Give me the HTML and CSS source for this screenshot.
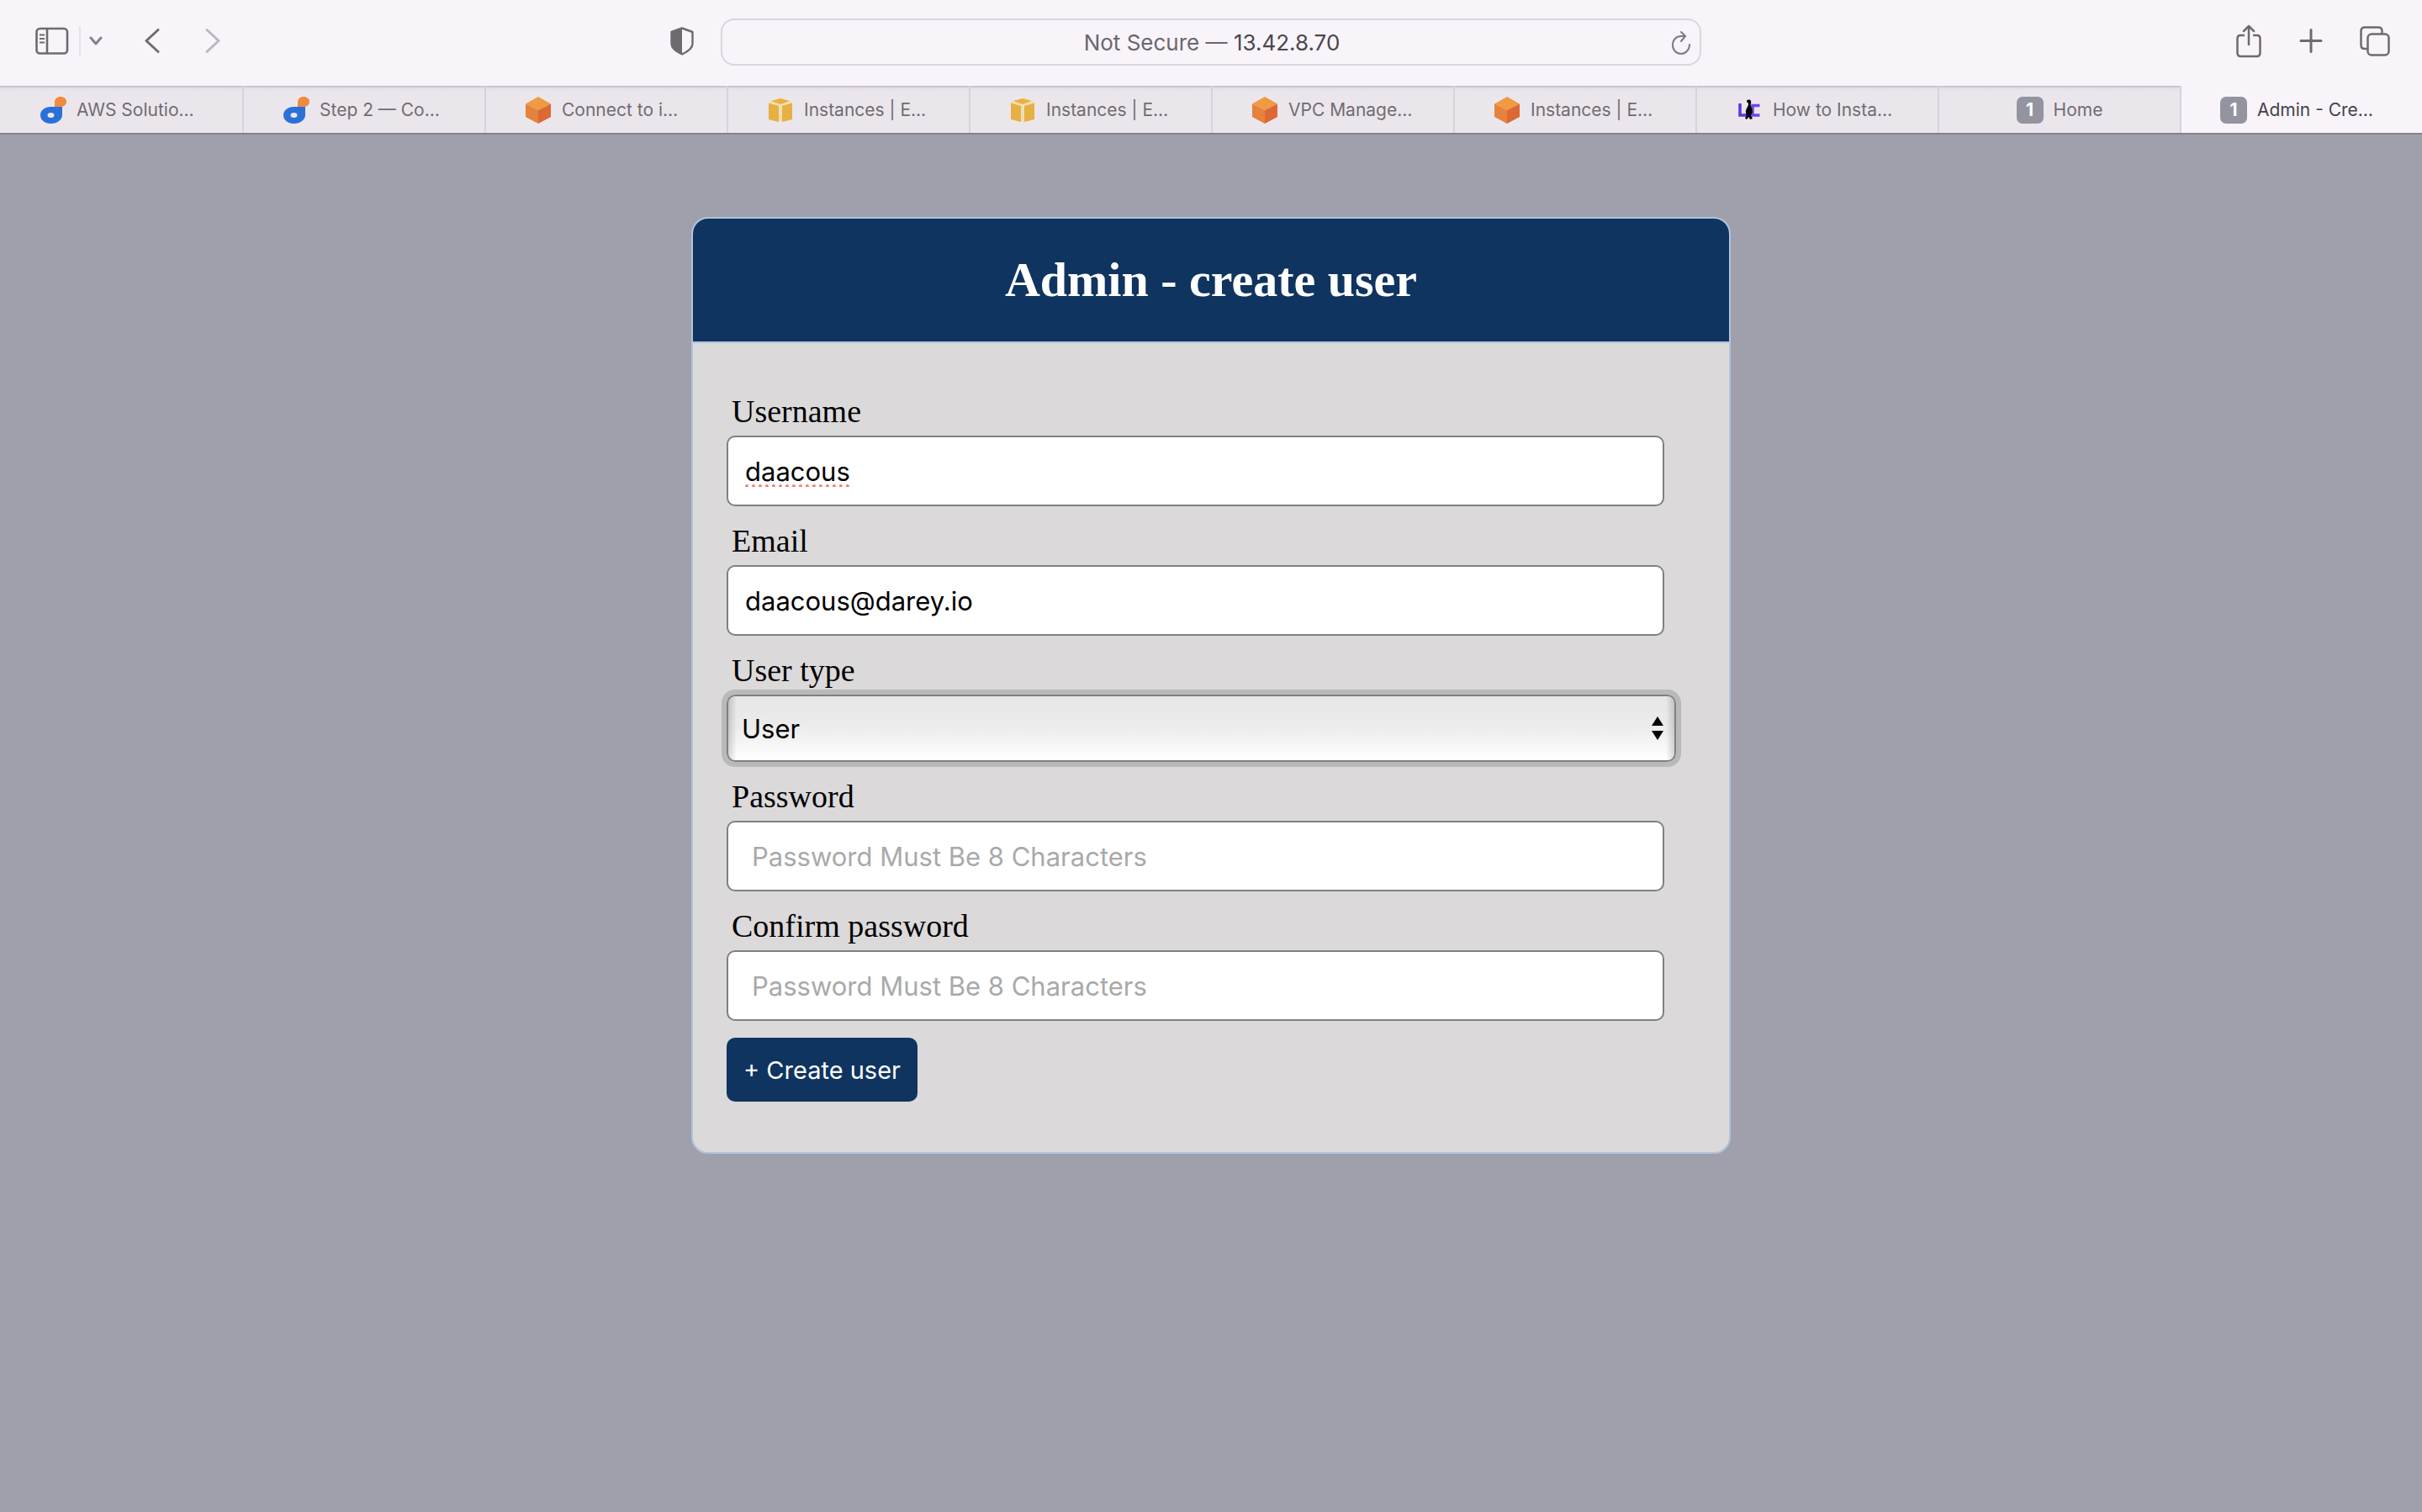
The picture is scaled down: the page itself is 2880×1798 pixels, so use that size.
FILE: index.html
```html
<!DOCTYPE html>
<html lang="en">
<head>
  <meta charset="utf-8">
  <title>Admin - Create user</title>
  <link rel="stylesheet" href="styles.css">
</head>
<body>
  <svg class="sprite" aria-hidden="true">
    <symbol id="ocean" viewBox="0 0 32 32">
      <path fill="#f08a3e" d="M18 12V6.500C18 2.500 21 0 25 0c4 0 7 2.400 7 6 0 3.500-3 6-7 6z"/>
      <path fill="#2b70d8" fill-rule="evenodd" d="M27 12v9.500C27 27.500 21 32 13.500 32S1 27.500 1 22s5-10 12.500-10zM13.500 19c-2.500 0-4 1.300-4 3s1.500 3 4 3 4-1.300 4-3-1.500-3-4-3z"/>
    </symbol>
    <symbol id="cube" viewBox="0 0 32 32">
      <path fill="#f09a42" d="M16 0l15 8.500L16 16 1 8.500z"/>
      <path fill="#e5823b" d="M1 8.500L16 16v16L1 24z"/>
      <path fill="#dc6834" d="M31 8.500L16 16v16l15-8z"/>
    </symbol>
    <symbol id="box" viewBox="0 0 32 32">
      <path fill="#f0dfb6" d="M16 2l14 4v20l-14 4-14-4V6z"/>
      <path fill="#ecb03a" d="M16 2l11 3-11 4L5 5z"/>
      <path fill="#e6b043" d="M2 7.500l12 3.500v19L2 27zM30 7.500L18 11v19l12-3z"/>
    </symbol>
    <symbol id="penguin" viewBox="0 0 32 32">
      <path fill="none" stroke="#5a34dc" stroke-width="3.500" d="M5 8v14h10"/>
      <path fill="none" stroke="#6f45ee" stroke-width="3.500" d="M28.500 10.500H20V22h8.500"/>
      <path fill="#000" d="M13 6c0-3 4-3 5-1 1 2-1 3.500 0 6 2 4 2.500 8 0 11l2 4-3 1-1.500-3-2.500 3-2-1.500 2-3.500c-2-3-1-7 1-10 1-2 1-3 1-4z"/>
    </symbol>
  </svg>

  <header class="browser">
    <div class="toolbar">
      <div class="toolbar-left">
        <button class="icon-button sidebar" type="button" aria-label="Sidebar">
          <svg width="40" height="34" viewBox="0 0 40 34" fill="none" stroke="#6f6a70" stroke-width="2.600"><rect x="1.500" y="2" width="36.500" height="29.500" rx="4"/><path d="M14 2v29"/><path stroke-width="2" d="M5 9.500h6M5 14h6M5 18.500h6"/></svg>
        </button>
        <span class="divider"></span>
        <button class="icon-button chevron" type="button" aria-label="Tab groups">
          <svg width="16" height="12" viewBox="0 0 16 12" fill="none" stroke="#86828a" stroke-width="3" stroke-linecap="round" stroke-linejoin="round"><path d="M2 2l6 7 6-7"/></svg>
        </button>
        <button class="icon-button back" type="button" aria-label="Back">
          <svg width="18" height="30" viewBox="0 0 18 30" fill="none" stroke="#6f6a70" stroke-width="3" stroke-linecap="round" stroke-linejoin="round"><path d="M16 1.500L2 14.500l14 13"/></svg>
        </button>
        <button class="icon-button forward" type="button" aria-label="Forward">
          <svg width="18" height="30" viewBox="0 0 18 30" fill="none" stroke="#bdb8bf" stroke-width="3" stroke-linecap="round" stroke-linejoin="round"><path d="M2 1.500l14 13-14 13"/></svg>
        </button>
        <button class="icon-button shield" type="button" aria-label="Privacy report">
          <svg width="28" height="34" viewBox="0 0 28 34"><path fill="none" stroke="#6f6a70" stroke-width="2.400" stroke-linejoin="round" d="M14 1.500L26.500 6v14c0 5-6 9.500-12.500 12.500C7.500 29.500 1.500 25 1.500 20V6z"/><path fill="#6f6a70" d="M14 1L1 6v14c0 5 6 10 13 13z"/></svg>
        </button>
      </div>
      <div class="address">
        <a class="url" href="#">Not Secure — <span class="host">13.42.8.70</span></a>
        <button class="icon-button reload" type="button" aria-label="Reload">
          <svg width="24" height="30" viewBox="0 0 24 30" fill="none" stroke="#7f7a81" stroke-width="2" stroke-linecap="round" stroke-linejoin="round"><path d="M22 17c0 6-4.500 11-10 11S2 23.500 2 17.500 6 7 12 7h5"/><path d="M12 2l5 5-5 6"/></svg>
        </button>
      </div>
      <div class="toolbar-right">
        <button class="icon-button" type="button" aria-label="Share">
          <svg width="32" height="40" viewBox="0 0 32 40" fill="none" stroke="#6f6a70" stroke-width="2.500" stroke-linecap="round" stroke-linejoin="round"><path stroke-linecap="butt" d="M11 13H6c-2 0-3.500 1-3.500 4v17c0 2.500 1 4 4 4h19c3 0 4-1.500 4-4V17c0-3-1.500-4-3.500-4h-5"/><path d="M16 24V3M10 8l6-6 6 6"/></svg>
        </button>
        <button class="icon-button" type="button" aria-label="New tab">
          <svg width="28" height="30" viewBox="0 0 28 30" fill="none" stroke="#6f6a70" stroke-width="3" stroke-linecap="round"><path d="M14 1.500v26M2 14.500h24"/></svg>
        </button>
        <button class="icon-button" type="button" aria-label="Show all tabs">
          <svg width="36" height="36" viewBox="0 0 36 36" fill="none" stroke="#6f6a70" stroke-width="2.500"><path d="M9 27H6c-3 0-4.500-1-4.500-4V6c0-3 1.500-4.500 4.500-4.500h16c3 0 4.500 1.500 4.500 4.500v3"/><rect x="9.500" y="9.500" width="25" height="25" rx="4.500"/></svg>
        </button>
      </div>
    </div>

    <nav class="tabs" aria-label="Tabs">
      <a class="tab" href="#"><svg class="tab-icon"><use href="#ocean"/></svg><span class="tab-title">AWS Solutio…</span></a>
      <a class="tab" href="#"><svg class="tab-icon"><use href="#ocean"/></svg><span class="tab-title">Step 2 — Co…</span></a>
      <a class="tab" href="#"><svg class="tab-icon"><use href="#cube"/></svg><span class="tab-title">Connect to i…</span></a>
      <a class="tab" href="#"><svg class="tab-icon"><use href="#box"/></svg><span class="tab-title">Instances | E…</span></a>
      <a class="tab" href="#"><svg class="tab-icon"><use href="#box"/></svg><span class="tab-title">Instances | E…</span></a>
      <a class="tab" href="#"><svg class="tab-icon"><use href="#cube"/></svg><span class="tab-title">VPC Manage…</span></a>
      <a class="tab" href="#"><svg class="tab-icon"><use href="#cube"/></svg><span class="tab-title">Instances | E…</span></a>
      <a class="tab" href="#"><svg class="tab-icon"><use href="#penguin"/></svg><span class="tab-title">How to Insta…</span></a>
      <a class="tab" href="#"><span class="tab-icon badge">1</span><span class="tab-title short">Home</span></a>
      <a class="tab active" href="#" aria-current="page"><span class="tab-icon badge">1</span><span class="tab-title">Admin - Cre…</span></a>
    </nav>
  </header>

  <main class="card">
    <h1 class="card-title">Admin - create user</h1>
    <form class="form">
      <div class="field">
        <label class="label" for="username">Username</label>
        <input class="input misspelled" id="username" type="text" value="daacous">
      </div>
      <div class="field">
        <label class="label" for="email">Email</label>
        <input class="input" id="email" type="email" value="daacous@darey.io">
      </div>
      <div class="field">
        <label class="label" for="user-type">User type</label>
        <div class="select-wrap">
          <select class="select" id="user-type">
            <option>User</option>
            <option>Admin</option>
          </select>
          <svg class="arrows" width="14" height="28" viewBox="0 0 14 28" aria-hidden="true"><path d="M7 0l7 11H0zM0 17h14L7 28z"/></svg>
        </div>
      </div>
      <div class="field">
        <label class="label" for="password">Password</label>
        <input class="input password" id="password" type="password" placeholder="Password Must Be 8 Characters">
      </div>
      <div class="field">
        <label class="label" for="confirm">Confirm password</label>
        <input class="input password" id="confirm" type="password" placeholder="Password Must Be 8 Characters">
      </div>
      <button class="submit" type="submit">+ Create user</button>
    </form>
  </main>
</body>
</html>
```
FILE: styles.css
```css
* {
  box-sizing: border-box;
}

body {
  margin: 0;
  min-height: 100vh;
  background: #a09fac;
  font-family: "Liberation Serif", serif;
}

button,
input,
select,
.browser {
  font-family: Inter, "Liberation Sans", sans-serif;
}

.sprite {
  display: none;
}

.browser {
  background: #f8f4fa;
  border-bottom: 2px solid #83828f;
}

.toolbar {
  display: grid;
  grid-template-columns: 1fr minmax(0, 1166px) 1fr;
  align-items: center;
  height: 102px;
  padding-bottom: 2px;
}

.toolbar-left,
.toolbar-right {
  display: flex;
  align-items: center;
  padding-bottom: 2px;
}

.toolbar-left {
  padding-right: 32px;
  padding-left: 42px;
}

.toolbar-right {
  justify-content: flex-end;
  gap: 44px;
  padding-right: 38px;
}

.icon-button {
  display: flex;
  padding: 0;
  border: 0;
  background: none;
}

.divider {
  width: 2px;
  height: 36px;
  margin: 0 10px 0 12px;
  background: #e8e3ea;
}

.chevron {
  margin-right: 50px;
}

.forward {
  margin-left: 54px;
}

.shield {
  margin-left: auto;
}

.address {
  display: flex;
  align-items: center;
  height: 56px;
  padding: 2px 10px 0 12px;
  border: 2px solid #dbd6dd;
  border-radius: 16px;
}

.url {
  flex: 1;
  padding-left: 24px;
  color: #6a676c;
  font-size: 26px;
  line-height: 32px;
  text-align: center;
  text-decoration: none;
}

.host {
  color: #4a474c;
}

.tabs {
  display: grid;
  grid-template-columns: repeat(10, minmax(0, 1fr));
  height: 56px;
}

.tab {
  display: flex;
  align-items: center;
  justify-content: center;
  gap: 12px;
  padding-top: 2px;
  background: linear-gradient(#cbc6cc 0 2px, #e2dde4 2px, #ebe6ec 6px);
  color: #716c73;
  font-size: 21px;
  line-height: 28px;
  text-decoration: none;
}

.tab + .tab {
  border-left: 2px solid #d8d3da;
}

.tab.active {
  background: #f8f4fa;
  color: #464248;
}

.tab-icon {
  flex: none;
  width: 32px;
  height: 32px;
}

.badge {
  border-radius: 7px;
  background: #9494a0;
  color: #fff;
  font-weight: 700;
  line-height: 32px;
  text-align: center;
}

.tab-title {
  width: 150px;
  white-space: nowrap;
}

.tab-title.short {
  width: auto;
}

.card {
  width: 1236px;
  max-width: 100%;
  margin: 98px auto 0;
  overflow: hidden;
  border: 2px solid #b0c4de;
  border-radius: 20px;
  background: #dbd9da;
}

.card-title {
  margin: 0;
  padding: 40px 0;
  border-bottom: 2px solid #b0c4de;
  background: #0f3460;
  color: #fff;
  font-size: 58px;
  line-height: 66px;
  text-align: center;
}

.form {
  padding: 60px 40px;
}

.field {
  margin-bottom: 20px;
}

.label {
  display: block;
  margin: 0 6px 8px;
  font-size: 38px;
  line-height: 42px;
}

.input,
.select {
  display: block;
  border: 2px solid #808080;
  border-radius: 10px;
  color: #000;
  font-size: 31px;
}

.input {
  width: 1115px;
  max-width: 100%;
  height: 84px;
  padding: 0 20px;
  background: #fff;
}

.password {
  padding-left: 28px;
}

.input::placeholder {
  color: #a9a9a9;
}

.misspelled {
  text-decoration: underline dotted 4px #f0807a;
  text-underline-offset: 5px;
}

.select-wrap {
  position: relative;
  width: 98%;
}

.select {
  width: 100%;
  height: 80px;
  padding: 0 16px;
  appearance: none;
  outline: 6px solid #b9b9ba;
  background:
    linear-gradient(90deg, rgba(0, 0, 0, 0.16), transparent 10px),
    linear-gradient(270deg, rgba(0, 0, 0, 0.16), transparent 10px),
    linear-gradient(#e6e6e6, #ececec 50%, #fff);
}

.arrows {
  position: absolute;
  top: 26px;
  right: 15px;
  pointer-events: none;
}

.submit {
  display: block;
  height: 76px;
  padding: 0 20px;
  border: 0;
  border-radius: 10px;
  background: #0f3460;
  color: #fff;
  font-size: 29px;
}
```
